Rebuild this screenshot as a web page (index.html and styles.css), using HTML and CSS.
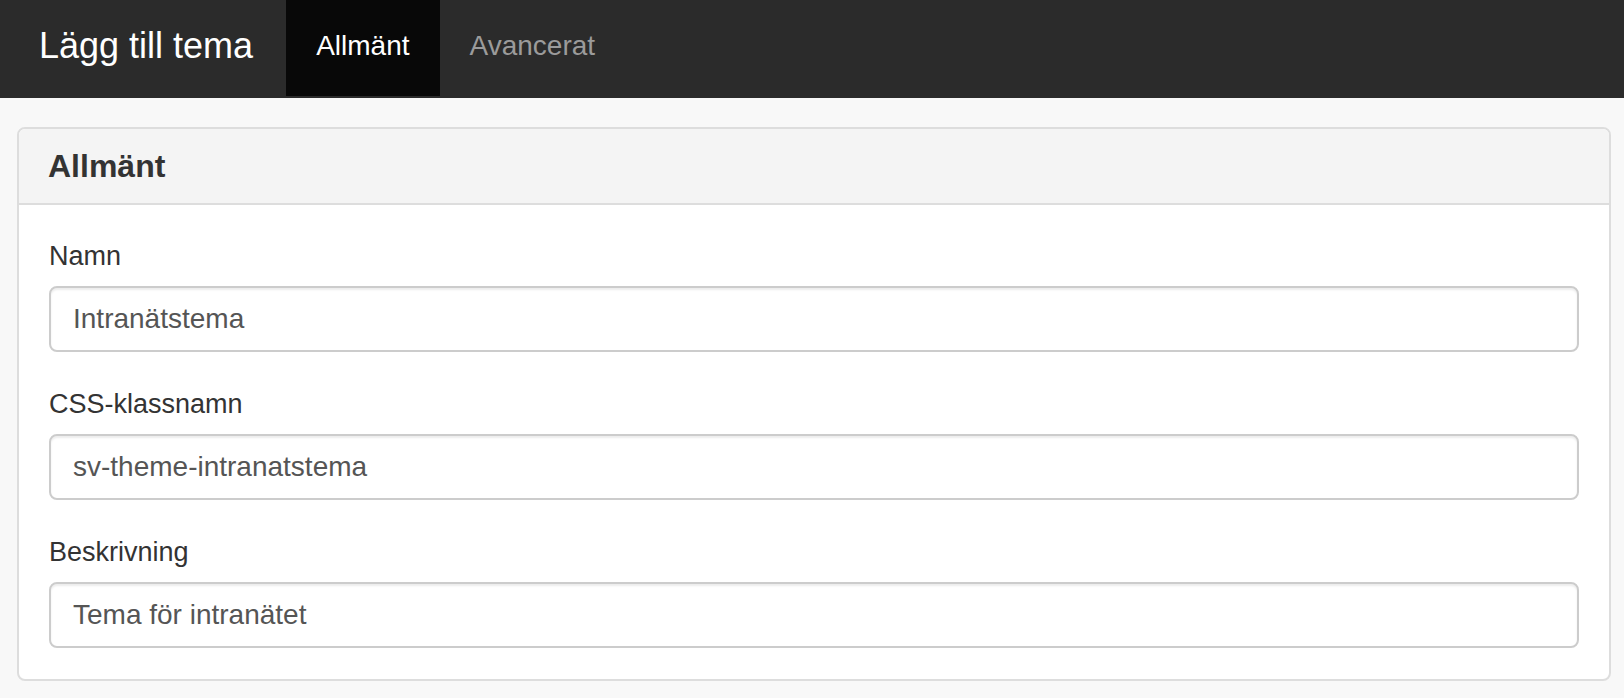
FILE: index.html
```html
<!DOCTYPE html>
<html lang="sv">
<head>
<meta charset="utf-8">
<title>Lägg till tema</title>
<link rel="stylesheet" href="styles.css">
</head>
<body>
<header class="navbar">
  <div class="brand">Lägg till tema</div>
  <nav class="tabs">
    <a class="tab active" href="#">Allmänt</a>
    <a class="tab" href="#">Avancerat</a>
  </nav>
</header>
<main class="main">
  <section class="panel">
    <div class="panel-heading">
      <h2 class="panel-title">Allmänt</h2>
    </div>
    <div class="panel-body">
      <div class="form-group">
        <label class="label" for="name">Namn</label>
        <input class="input" id="name" type="text" value="Intranätstema">
      </div>
      <div class="form-group">
        <label class="label" for="cls">CSS-klassnamn</label>
        <input class="input" id="cls" type="text" value="sv-theme-intranatstema">
      </div>
      <div class="form-group">
        <label class="label" for="desc">Beskrivning</label>
        <input class="input" id="desc" type="text" value="Tema för intranätet">
      </div>
    </div>
  </section>
</main>
</body>
</html>
```
FILE: styles.css
```css
* {
  box-sizing: border-box;
}

html, body {
  margin: 0;
  padding: 0;
}

body {
  background: #f8f8f8;
  font-family: "Liberation Sans", Arial, Helvetica, sans-serif;
  color: #333333;
}

.navbar {
  display: flex;
  align-items: flex-start;
  height: 98px;
  background: #2b2b2b;
}

.brand {
  padding: 0 33px 0 39px;
  font-size: 36px;
  line-height: 92px;
  color: #ffffff;
  white-space: nowrap;
}

.tabs {
  display: flex;
}

.tab {
  display: block;
  height: 96px;
  padding: 0 30px;
  font-size: 28px;
  line-height: 91px;
  color: #9b9b9b;
  text-decoration: none;
  white-space: nowrap;
}

.tab.active {
  background: #080808;
  color: #ffffff;
}

.main {
  padding: 29px 13px 0 17px;
}

.panel {
  background: #ffffff;
  border: 2px solid #dddddd;
  border-radius: 8px;
  overflow: hidden;
}

.panel-heading {
  background: #f4f4f4;
  border-bottom: 2px solid #dddddd;
  padding: 19px 29px;
}

.panel-title {
  margin: 0;
  font-size: 32px;
  line-height: 36px;
  font-weight: bold;
  color: #333333;
}

.panel-body {
  padding: 32px 30px 31px;
}

.form-group {
  margin-bottom: 33px;
}

.form-group:last-child {
  margin-bottom: 0;
}

.label {
  display: block;
  margin-bottom: 11px;
  font-size: 27px;
  line-height: 38px;
  font-weight: normal;
  color: #333333;
}

.input {
  display: block;
  width: 100%;
  height: 66px;
  margin: 0;
  padding: 0 22px;
  border: 2px solid #cccccc;
  border-radius: 8px;
  background: #ffffff;
  box-shadow: inset 0 2px 2px rgba(0, 0, 0, 0.075);
  font-family: "Liberation Sans", Arial, Helvetica, sans-serif;
  font-size: 28px;
  color: #555555;
  outline: none;
}
```
